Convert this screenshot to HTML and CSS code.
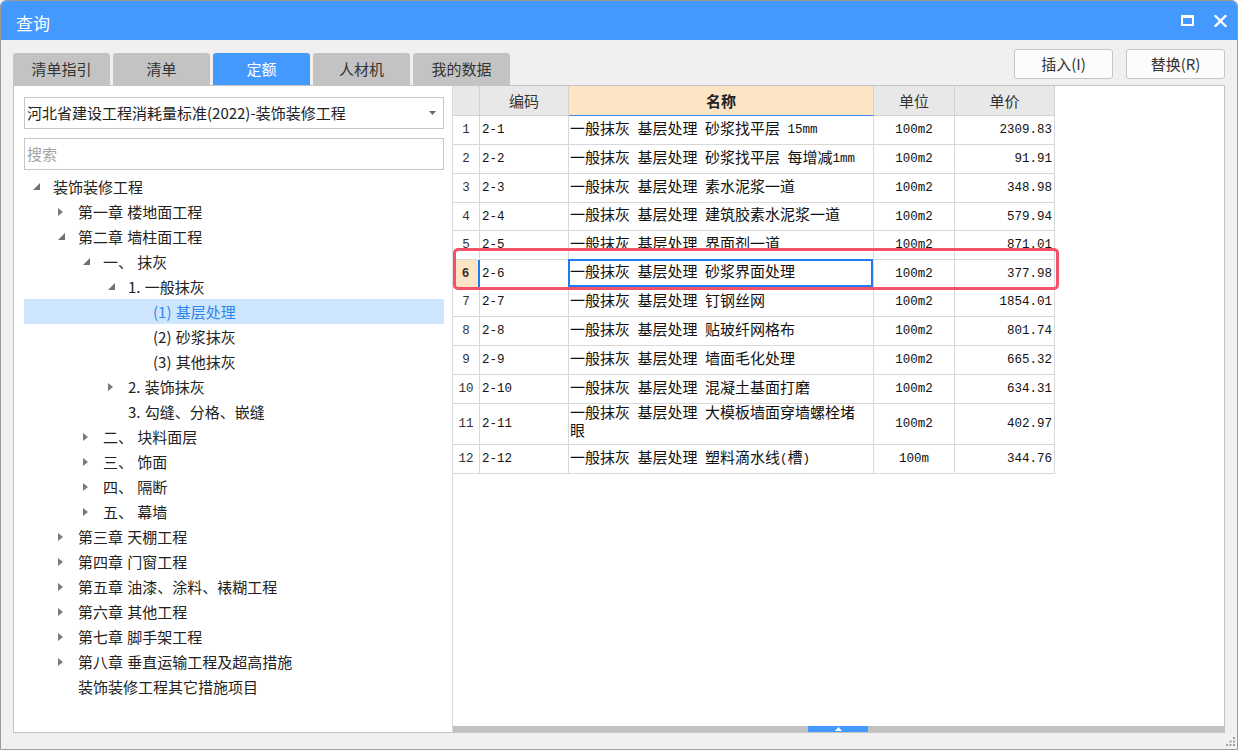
FILE: index.html
```html
<!DOCTYPE html>
<html lang="zh-CN">
<head>
<meta charset="utf-8">
<title>查询</title>
<link rel="stylesheet" href="styles.css">
</head>
<body>
<div class="window">
  <div class="titlebar">
    <span class="title">查询</span>
    <div class="win-ctrls">
      <svg class="ic-max" width="13" height="11" viewBox="0 0 13 11"><rect x="1" y="1.5" width="11" height="8.5" fill="none" stroke="#fff" stroke-width="2"/><rect x="0" y="0" width="13" height="3" fill="#fff"/></svg>
      <svg class="ic-close" width="13" height="12" viewBox="0 0 13 12"><path d="M1.5 1 L11.5 11 M11.5 1 L1.5 11" stroke="#fff" stroke-width="2.4" stroke-linecap="square"/></svg>
    </div>
  </div>
  <div class="body">
    <div class="topbar">
      <div class="tabs">
        <div class="tab">清单指引</div>
        <div class="tab">清单</div>
        <div class="tab active">定额</div>
        <div class="tab">人材机</div>
        <div class="tab">我的数据</div>
      </div>
      <div class="actions">
        <div class="btn">插入(I)</div>
        <div class="btn">替换(R)</div>
      </div>
    </div>
    <div class="panes">
      <div class="left">
        <div class="select">
          <span>河北省建设工程消耗量标准(2022)-装饰装修工程</span>
          <svg class="caret" width="7" height="4" viewBox="0 0 7 4"><path d="M0 0 H7 L3.5 4 Z" fill="#6a6a6a"/></svg>
        </div>
        <div class="search">搜索</div>
        <ul class="tree">
          <li class="node l0"><span class="tw"><svg width="7" height="7" viewBox="0 0 7 7"><path d="M7 0 V7 H0 Z" fill="#707070"/></svg></span>装饰装修工程</li>
          <li class="node l1"><span class="tw"><svg width="5" height="8" viewBox="0 0 5 8"><path d="M0 0 L5 4 L0 8 Z" fill="#7a7a7a"/></svg></span>第一章 楼地面工程</li>
          <li class="node l1"><span class="tw"><svg width="7" height="7" viewBox="0 0 7 7"><path d="M7 0 V7 H0 Z" fill="#707070"/></svg></span>第二章 墙柱面工程</li>
          <li class="node l2"><span class="tw"><svg width="7" height="7" viewBox="0 0 7 7"><path d="M7 0 V7 H0 Z" fill="#707070"/></svg></span>一、 抹灰</li>
          <li class="node l3"><span class="tw"><svg width="7" height="7" viewBox="0 0 7 7"><path d="M7 0 V7 H0 Z" fill="#707070"/></svg></span>1. 一般抹灰</li>
          <li class="node l4 sel"><span class="tw"></span>(1) 基层处理</li>
          <li class="node l4"><span class="tw"></span>(2) 砂浆抹灰</li>
          <li class="node l4"><span class="tw"></span>(3) 其他抹灰</li>
          <li class="node l3"><span class="tw"><svg width="5" height="8" viewBox="0 0 5 8"><path d="M0 0 L5 4 L0 8 Z" fill="#7a7a7a"/></svg></span>2. 装饰抹灰</li>
          <li class="node l3"><span class="tw"></span>3. 勾缝、分格、嵌缝</li>
          <li class="node l2"><span class="tw"><svg width="5" height="8" viewBox="0 0 5 8"><path d="M0 0 L5 4 L0 8 Z" fill="#7a7a7a"/></svg></span>二、 块料面层</li>
          <li class="node l2"><span class="tw"><svg width="5" height="8" viewBox="0 0 5 8"><path d="M0 0 L5 4 L0 8 Z" fill="#7a7a7a"/></svg></span>三、 饰面</li>
          <li class="node l2"><span class="tw"><svg width="5" height="8" viewBox="0 0 5 8"><path d="M0 0 L5 4 L0 8 Z" fill="#7a7a7a"/></svg></span>四、 隔断</li>
          <li class="node l2"><span class="tw"><svg width="5" height="8" viewBox="0 0 5 8"><path d="M0 0 L5 4 L0 8 Z" fill="#7a7a7a"/></svg></span>五、 幕墙</li>
          <li class="node l1"><span class="tw"><svg width="5" height="8" viewBox="0 0 5 8"><path d="M0 0 L5 4 L0 8 Z" fill="#7a7a7a"/></svg></span>第三章 天棚工程</li>
          <li class="node l1"><span class="tw"><svg width="5" height="8" viewBox="0 0 5 8"><path d="M0 0 L5 4 L0 8 Z" fill="#7a7a7a"/></svg></span>第四章 门窗工程</li>
          <li class="node l1"><span class="tw"><svg width="5" height="8" viewBox="0 0 5 8"><path d="M0 0 L5 4 L0 8 Z" fill="#7a7a7a"/></svg></span>第五章 油漆、涂料、裱糊工程</li>
          <li class="node l1"><span class="tw"><svg width="5" height="8" viewBox="0 0 5 8"><path d="M0 0 L5 4 L0 8 Z" fill="#7a7a7a"/></svg></span>第六章 其他工程</li>
          <li class="node l1"><span class="tw"><svg width="5" height="8" viewBox="0 0 5 8"><path d="M0 0 L5 4 L0 8 Z" fill="#7a7a7a"/></svg></span>第七章 脚手架工程</li>
          <li class="node l1"><span class="tw"><svg width="5" height="8" viewBox="0 0 5 8"><path d="M0 0 L5 4 L0 8 Z" fill="#7a7a7a"/></svg></span>第八章 垂直运输工程及超高措施</li>
          <li class="node l1"><span class="tw"></span>装饰装修工程其它措施项目</li>
        </ul>
      </div>
      <div class="right">
        <div class="grid">
          <div class="c h"></div>
          <div class="c h">编码</div>
          <div class="c h hcur">名称</div>
          <div class="c h">单位</div>
          <div class="c h">单价</div>

          <div class="c rn">1</div><div class="c code">2-1</div><div class="c name">一般抹灰 基层处理 砂浆找平层<span class="n">&nbsp;15mm</span></div><div class="c unit">100m2</div><div class="c price">2309.83</div>
          <div class="c rn">2</div><div class="c code">2-2</div><div class="c name">一般抹灰 基层处理 砂浆找平层 每增减<span class="n">1mm</span></div><div class="c unit">100m2</div><div class="c price">91.91</div>
          <div class="c rn">3</div><div class="c code">2-3</div><div class="c name">一般抹灰 基层处理 素水泥浆一道</div><div class="c unit">100m2</div><div class="c price">348.98</div>
          <div class="c rn">4</div><div class="c code">2-4</div><div class="c name">一般抹灰 基层处理 建筑胶素水泥浆一道</div><div class="c unit">100m2</div><div class="c price">579.94</div>
          <div class="c rn">5</div><div class="c code">2-5</div><div class="c name">一般抹灰 基层处理 界面剂一道</div><div class="c unit">100m2</div><div class="c price">871.01</div>
          <div class="c rn rcur">6</div><div class="c code">2-6</div><div class="c name cur">一般抹灰 基层处理 砂浆界面处理</div><div class="c unit">100m2</div><div class="c price">377.98</div>
          <div class="c rn">7</div><div class="c code">2-7</div><div class="c name">一般抹灰 基层处理 钉钢丝网</div><div class="c unit">100m2</div><div class="c price">1854.01</div>
          <div class="c rn">8</div><div class="c code">2-8</div><div class="c name">一般抹灰 基层处理 贴玻纤网格布</div><div class="c unit">100m2</div><div class="c price">801.74</div>
          <div class="c rn">9</div><div class="c code">2-9</div><div class="c name">一般抹灰 基层处理 墙面毛化处理</div><div class="c unit">100m2</div><div class="c price">665.32</div>
          <div class="c rn">10</div><div class="c code">2-10</div><div class="c name">一般抹灰 基层处理 混凝土基面打磨</div><div class="c unit">100m2</div><div class="c price">634.31</div>
          <div class="c rn">11</div><div class="c code">2-11</div><div class="c name wrap">一般抹灰 基层处理 大模板墙面穿墙螺栓堵<br>眼</div><div class="c unit">100m2</div><div class="c price">402.97</div>
          <div class="c rn">12</div><div class="c code">2-12</div><div class="c name">一般抹灰 基层处理 塑料滴水线<span class="n">(</span>槽<span class="n">)</span></div><div class="c unit">100m</div><div class="c price">344.76</div>
        </div>
        <div class="hscroll">
          <div class="thumb"><svg width="7" height="4" viewBox="0 0 7 4"><path d="M0 4 L3.5 0 L7 4 Z" fill="#fff"/></svg></div>
        </div>
        <div class="hl"></div>
      </div>
    </div>
  </div>
  <svg class="grip" width="9" height="9" viewBox="0 0 9 9">
    <rect x="7" y="0" width="2" height="2" fill="#a0a0a0"/>
    <rect x="3.5" y="3.5" width="2" height="2" fill="#a0a0a0"/>
    <rect x="7" y="3.5" width="2" height="2" fill="#a0a0a0"/>
    <rect x="0" y="7" width="2" height="2" fill="#a0a0a0"/>
    <rect x="3.5" y="7" width="2" height="2" fill="#a0a0a0"/>
    <rect x="7" y="7" width="2" height="2" fill="#a0a0a0"/>
  </svg>
</div>
</body>
</html>
```

FILE: styles.css
```css
* { box-sizing: border-box; margin: 0; padding: 0; }

html, body {
  width: 1238px;
  height: 750px;
  overflow: hidden;
}

body {
  font-family: "Noto Sans CJK SC", "Noto Sans", sans-serif;
  background: #ffffff;
}

.window {
  position: relative;
  width: 1238px;
  height: 750px;
  border: 1px solid #9a9a9a;
  border-radius: 6px 6px 0 0;
  overflow: hidden;
  display: flex;
  flex-direction: column;
  background: #f0f0f0;
}

/* title bar */
.titlebar {
  height: 39px;
  flex-shrink: 0;
  background: #4499ff;
  display: flex;
  align-items: center;
  padding-left: 15px;
  color: #fff;
}
.title {
  flex: 1;
  font-size: 17px;
  line-height: 17px;
  margin-top: 3px;
}
.win-ctrls {
  display: flex;
  align-items: center;
  gap: 20px;
  padding-right: 10px;
}

/* body */
.body {
  flex: 1;
  display: flex;
  flex-direction: column;
  padding: 9px 12px 16px 12px;
}

.topbar {
  height: 36px;
  flex-shrink: 0;
  display: flex;
  justify-content: space-between;
  align-items: flex-end;
}
.tabs { display: flex; gap: 3px; }
.tab {
  width: 97px;
  height: 32px;
  background: #c3c3c3;
  border-radius: 3px 3px 0 0;
  color: #333;
  font-size: 15px;
  display: flex;
  align-items: center;
  justify-content: center;
  padding-bottom: 1px;
}
.tab.active { background: #4499ff; color: #fff; }

.actions {
  align-self: flex-start;
  display: flex;
  gap: 13px;
}
.btn {
  width: 99px;
  height: 30px;
  background: #fcfcfc;
  border: 1px solid #c6c6c6;
  border-radius: 3px;
  font-size: 15px;
  color: #333;
  display: flex;
  align-items: center;
  justify-content: center;
  padding-bottom: 1px;
}

/* panes */
.panes {
  flex: 1;
  display: flex;
  border: 1px solid #c4c4c4;
  background: #fff;
}

.left {
  width: 439px;
  flex-shrink: 0;
  border-right: 1px solid #dcdcdc;
  padding: 11px 0 0 10px;
}
.select, .search {
  width: 420px;
  height: 32px;
  border: 1px solid #c6c6c6;
  display: flex;
  align-items: center;
  padding-left: 2px;
  font-size: 15px;
}
.select { color: #222; padding-right: 7px; padding-bottom: 2px; }
.select .caret { margin-left: auto; margin-top: 2px; }
.search { margin-top: 9px; color: #a3a3a3; padding-bottom: 1px; }

.tree {
  list-style: none;
  margin-top: 4px;
  width: 420px;
}
.node {
  height: 25px;
  display: flex;
  align-items: center;
  font-size: 15px;
  color: #222;
  white-space: nowrap;
  word-spacing: 1px;
}
.node.sel { background: #cde6fd; color: #2f86e8; }
.l1 { padding-left: 25px; }
.l2 { padding-left: 50px; }
.l3 { padding-left: 75px; }
.l4 { padding-left: 100px; }
.tw {
  width: 29px;
  flex-shrink: 0;
  display: flex;
  align-items: center;
  padding-left: 9px;
}

/* right pane / grid */
.right {
  flex: 1;
  position: relative;
  display: flex;
  flex-direction: column;
}
.grid {
  display: grid;
  width: 602px;
  grid-template-columns: 27px 89px 305px 81px 100px;
  grid-template-rows: 30px 29px 29px 29px 28px 29px 28px 29px 29px 29px 29px 41px 29px;
}
.c {
  position: relative;
  border-right: 1px solid #d8d8d8;
  border-bottom: 1px solid #d8d8d8;
  display: flex;
  align-items: center;
  white-space: nowrap;
  overflow: visible;
  color: #111;
  font-family: "Liberation Mono", "Noto Sans CJK SC", monospace;
  font-size: 12.5px;
}
.c.h {
  background: #e8e8e8;
  border-color: #d2d2d2;
  justify-content: center;
  font-family: "Noto Sans CJK SC", sans-serif;
  font-size: 15px;
  color: #333;
}
.c.hcur {
  background: #fde4c5;
  font-weight: bold;
  border-bottom-color: #3d8af7;
  color: #222;
}
.rn { justify-content: center; color: #333; }
.rn.rcur {
  background: #fde4c5;
  font-weight: bold;
  border-right: 2px solid #1f7cf0;
}
.code { padding-left: 2px; }
.name {
  padding-left: 1px;
  font-size: 15px;
  word-spacing: -1.5px;
  line-height: 17px;
}
.name .n { font-size: 12.5px; word-spacing: 0; }
.name.wrap { white-space: normal; line-height: 18px; }
.name.cur::after {
  content: "";
  position: absolute;
  left: -1px;
  top: -1px;
  right: 0;
  bottom: 0;
  border: 2px solid #1f7cf0;
}
.unit { justify-content: center; }
.price { justify-content: flex-end; padding-right: 2px; }

.hscroll {
  margin-top: auto;
  height: 6px;
  background: #c1c1c1;
  display: flex;
  padding-left: 355px;
}
.thumb {
  width: 60px;
  height: 6px;
  background: #4499ff;
  display: flex;
  align-items: center;
  justify-content: center;
}

.hl {
  position: absolute;
  left: 0;
  top: 162px;
  width: 606px;
  height: 42px;
  border: 3px solid #f5506a;
  border-radius: 5px;
}

.grip {
  position: absolute;
  right: 2px;
  bottom: 3px;
}
```
